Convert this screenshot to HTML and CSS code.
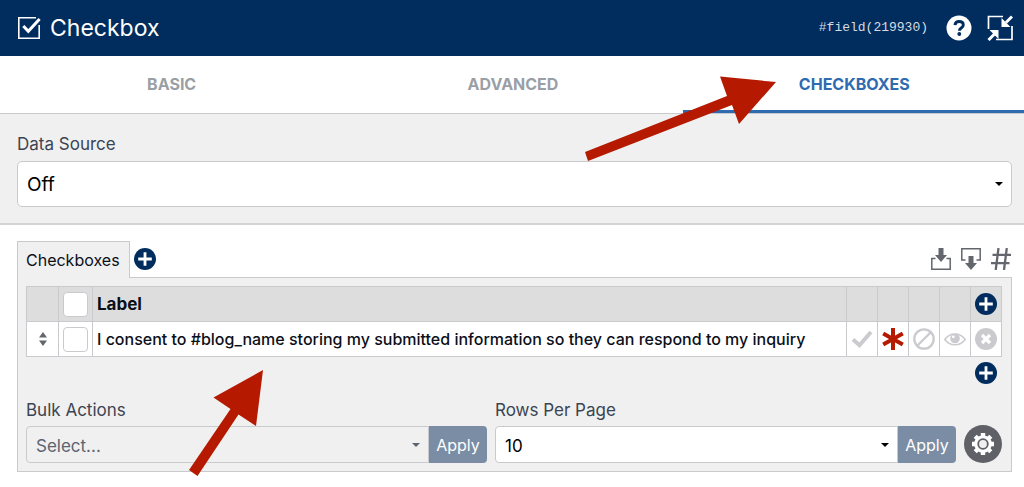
FILE: index.html
```html
<!DOCTYPE html>
<html lang="en">
<head>
<meta charset="utf-8">
<meta name="viewport" content="width=device-width, initial-scale=1">
<title>Checkbox</title>
<link rel="stylesheet" href="styles.css">
</head>
<body>
<svg class="sprite" aria-hidden="true">
  <symbol id="plus" viewBox="0 0 22 22"><circle cx="11" cy="11" r="11" fill="#002d5d"/><path d="M11 4.2v13.6M4.2 11h13.6" stroke="#fff" stroke-width="2.8"/></symbol>
</svg>
<header class="topbar">
  <svg class="icon-title" viewBox="0 0 24 24" fill="none" stroke="#fff" aria-hidden="true"><path d="M19 1.8H1.8v20.4h20.4V9" stroke-width="1.6"/><path d="M6.3 10l5 5.300L22.600 3" stroke-width="3"/></svg>
  <h1 class="title">Checkbox</h1>
  <code class="merge-tag">#field(219930)</code>
  <button class="icon-button help" aria-label="Help">
    <svg viewBox="0 0 26 26"><circle cx="13" cy="13" r="12.500" fill="#fff"/><path d="M9 10.200C9.200 7.600 10.800 6.500 13.100 6.500c2.400 0 4.200 1.300 4.200 3.500 0 3-3.900 3-3.900 5.700" fill="none" stroke="#002d5d" stroke-width="2.900"/><circle cx="13.300" cy="19" r="1.900" fill="#002d5d"/></svg>
  </button>
  <button class="icon-button" aria-label="Minimize">
    <svg viewBox="0 0 26 26"><path d="M1.500 14V1.500H16M25 11v13.500H9" fill="none" stroke="#fff" stroke-width="1.700"/><path d="M25 1.500l-6 6M1.500 25l6-6" stroke="#fff" stroke-width="3"/><path d="M14.500 3v9h9zM2.500 15h9v9z" fill="#fff"/></svg>
  </button>
</header>
<nav class="tabs">
  <a class="tab" href="#basic">BASIC</a>
  <a class="tab" href="#advanced">ADVANCED</a>
  <a class="tab active" href="#checkboxes" aria-current="page">CHECKBOXES</a>
</nav>
<main>
  <section class="source">
    <label class="label" for="source">Data Source</label>
    <div class="select-wrap"><select class="select large" id="source"><option>Off</option></select></div>
  </section>
  <section class="options">
    <div class="options-head">
      <button class="subtab">Checkboxes</button>
      <button class="icon-button small" aria-label="Add table"><svg><use href="#plus"/></svg></button>
      <div class="tools">
        <button class="icon-button small" aria-label="Import"><svg viewBox="0 0 22 22"><path d="M5.500 10.500H1.800v10.700h18.400V10.500h-3.700" fill="none" stroke="#63666c" stroke-width="1.500"/><path d="M8.500 0h5v7H17l-6 7-6-7h3.500z" fill="#63666c"/></svg></button>
        <button class="icon-button small" aria-label="Export"><svg viewBox="0 0 22 22"><path d="M5.500 12H1.800V.8h18.400V12h-3.700" fill="none" stroke="#63666c" stroke-width="1.500"/><path d="M8.500 8h5v7H17l-6 7-6-7h3.500z" fill="#63666c"/></svg></button>
        <button class="icon-button small" aria-label="Show IDs"><svg viewBox="0 0 22 22"><path d="M8.500 0L5.700 22M16.800 0L14 22M2.500 6.800H21M1 15.200h18.500" fill="none" stroke="#63666c" stroke-width="2.300"/></svg></button>
      </div>
    </div>
    <div class="panel">
      <table class="grid">
        <thead>
          <tr>
            <th class="col-handle"></th>
            <th class="col-check"><input class="check" type="checkbox" aria-label="Select all rows"></th>
            <th class="col-label">Label</th>
            <th class="col-icon"></th><th class="col-icon"></th><th class="col-icon"></th><th class="col-icon"></th>
            <th class="col-icon"><button class="icon-button small" aria-label="Add row"><svg><use href="#plus"/></svg></button></th>
          </tr>
        </thead>
        <tbody>
          <tr>
            <td><button class="icon-button handle" aria-label="Move row"><svg viewBox="0 0 8 14"><path d="M4 0l4 5.500H0zM4 14l4-5.500H0z" fill="#63666c"/></svg></button></td>
            <td><input class="check" type="checkbox" aria-label="Select row"></td>
            <td class="col-label">I consent to #blog_name storing my submitted information so they can respond to my inquiry</td>
            <td><button class="icon-button small" aria-label="Default"><svg viewBox="0 0 22 22"><path d="M2 11.500l6.500 5.700L20 4" fill="none" stroke="#cbcbcf" stroke-width="4"/></svg></button></td>
            <td><button class="icon-button small" aria-label="Required"><svg viewBox="0 0 22 22"><path d="M11 0v22M1.200 5.500l19.600 11M1.200 16.500l19.600-11" stroke="#b51a00" stroke-width="4"/></svg></button></td>
            <td><button class="icon-button small" aria-label="Disabled"><svg viewBox="0 0 22 22"><circle cx="11" cy="11" r="9.700" fill="none" stroke="#cbcbcf" stroke-width="2.300"/><path d="M4.500 17.500l13-13" stroke="#cbcbcf" stroke-width="2.300"/></svg></button></td>
            <td><button class="icon-button small" aria-label="Visibility"><svg viewBox="0 0 22 22"><path d="M.8 11.500C6 4 16 4 21.200 11.500 16 18.500 6 18.500.8 11.500z" fill="none" stroke="#cbcbcf" stroke-width="1.500"/><circle cx="11" cy="10.500" r="4.800" fill="#cbcbcf"/><circle cx="9.300" cy="8.800" r="1.400" fill="#fff"/></svg></button></td>
            <td><button class="icon-button small" aria-label="Delete row"><svg viewBox="0 0 22 22"><circle cx="11" cy="11" r="11" fill="#cbcbcf"/><path d="M7 7l8 8M15 7l-8 8" stroke="#fff" stroke-width="3.200"/></svg></button></td>
          </tr>
        </tbody>
      </table>
      <div class="add-row"><button class="icon-button small" aria-label="Add row at end"><svg><use href="#plus"/></svg></button></div>
      <div class="actions">
        <div class="field">
          <label class="label" for="bulk">Bulk Actions</label>
          <div class="combo">
            <div class="select-wrap muted"><select class="select" id="bulk"><option>Select...</option></select></div>
            <button class="apply">Apply</button>
          </div>
        </div>
        <div class="field">
          <label class="label" for="rows">Rows Per Page</label>
          <div class="combo">
            <div class="select-wrap"><select class="select" id="rows"><option>10</option></select></div>
            <button class="apply">Apply</button>
          </div>
        </div>
        <button class="icon-button gear" aria-label="Settings"><svg viewBox="0 0 38 38"><circle cx="19" cy="19" r="19" fill="#606167"/><circle cx="19" cy="19" r="8.800" fill="#fff"/><path d="M19 8v22M8 19h22M11.200 11.200l15.600 15.600M26.800 11.200L11.200 26.800" stroke="#fff" stroke-width="4.400"/><circle cx="19" cy="19" r="4.800" fill="#f0f0f0" stroke="#606167" stroke-width="1.800"/></svg></button>
      </div>
    </div>
  </section>
</main>
<svg class="arrows" width="1024" height="487" fill="#b51a00" aria-hidden="true">
  <path d="M585 152L727 96 720 76.500 776 82 739 124 732 105 588 161z"/>
  <path d="M189 470L230.500 409 213.500 397.500 263 370 256 426 238.500 414.500 197.500 476z"/>
</svg>
</body>
</html>
```
FILE: styles.css
```css
* { box-sizing: border-box; }

body {
  margin: 0;
  position: relative;
  overflow-x: hidden;
  background: #fff;
  color: #0b0f19;
  font: 17px/24px Inter, "Liberation Sans", sans-serif;
}

button, select, input { font: inherit; margin: 0; }

.sprite { position: absolute; width: 0; height: 0; }

.arrows {
  position: absolute;
  top: 0;
  left: 0;
  pointer-events: none;
}

.icon-button {
  display: block;
  flex: none;
  width: 26px;
  height: 26px;
  padding: 0;
  border: 0;
  background: none;
}

.icon-button svg { display: block; width: 100%; height: 100%; }
.small { width: 22px; height: 22px; }

.topbar {
  display: flex;
  align-items: center;
  height: 56px;
  padding: 0 11px 0 17px;
  background: #002d5d;
  color: #fff;
}

.icon-title { width: 24px; height: 24px; margin-right: 9px; }

.title {
  margin: 0;
  font-size: 23px;
  font-weight: 400;
  line-height: 32px;
}

.merge-tag {
  margin-left: auto;
  color: #d5dbe3;
  font: 13px/16px "Liberation Mono", monospace;
}

.help { margin: 0 15px 0 18px; }

.tabs {
  display: grid;
  grid-template-columns: repeat(3, 1fr);
  height: 58px;
  border-bottom: 1px solid #c9cace;
}

.tab {
  display: flex;
  align-items: center;
  justify-content: center;
  padding: 2px 0 0 2px;
  border-bottom: 3px solid transparent;
  color: #9a9fa6;
  font-size: 16px;
  font-weight: 700;
  text-decoration: none;
}

.tab.active { border-color: #2e6bb0; color: #2e6bb0; }

.source {
  padding: 18px 12px 16px 17px;
  border-bottom: 2px solid #d3d3d3;
  background: #f0f0f0;
}

.label { display: block; color: #3b4452; }
.source .label { margin-bottom: 5px; }

.select-wrap { position: relative; flex: 1; }

.select-wrap::after {
  content: "";
  position: absolute;
  top: 50%;
  right: 9px;
  margin-top: -2px;
  border: 4px solid transparent;
  border-top-color: #000;
  border-bottom: 0;
  pointer-events: none;
}

.select {
  display: block;
  width: 100%;
  height: 37px;
  padding: 3px 24px 0 9px;
  border: 1px solid #c9cace;
  border-radius: 4px 0 0 4px;
  appearance: none;
  background: #fff;
  color: #000;
}

.select.large {
  height: 46px;
  padding-top: 1px;
  border-radius: 5px;
  font-size: 19px;
}

.muted .select { background: #f0f0f0; color: #5b6471; }
.muted::after { border-top-color: #5b6471; }

.options { padding: 16px 12px 15px 17px; }
.options-head { display: flex; align-items: center; gap: 4px; }

.subtab {
  position: relative;
  height: 37px;
  margin-bottom: -1px;
  padding: 0 9px 0 8px;
  border: 1px solid #c9cace;
  border-bottom: 0;
  background: #f0f0f0;
  color: #0b0f19;
  font-size: 16px;
}

.tools { display: flex; gap: 8px; margin-left: auto; }

.panel {
  padding: 8px 9px 8px 8px;
  border: 1px solid #c9cace;
  background: #f0f0f0;
}

.grid {
  width: 100%;
  border-collapse: collapse;
  table-layout: fixed;
}

.grid th, .grid td {
  height: 35px;
  padding: 0;
  border: 1px solid #c9cace;
  background: #fff;
}

.grid th { background: #ddd; }
.grid td { font-size: 16px; font-weight: 500; }
.grid .col-label { padding-left: 4px; text-align: left; }
.grid .col-handle { width: 32px; }
.grid .col-check { width: 34px; }
.grid .col-icon { width: 31px; }
.grid .icon-button { margin: 0 auto; }
.grid .handle { width: 8px; height: 14px; }

.check {
  display: block;
  width: 25px;
  height: 25px;
  margin: 0 auto;
  border: 1px solid #c9cace;
  border-radius: 4px;
  appearance: none;
  background: #fff;
}

.add-row { display: flex; justify-content: flex-end; padding: 5px 5px 0; }

.actions { display: flex; align-items: flex-end; gap: 8px; margin-top: 14px; }
.field { flex: 1; }
.field .label { margin-bottom: 4px; }
.combo { display: flex; }

.apply {
  width: 58px;
  height: 37px;
  padding: 0;
  border: 0;
  border-radius: 0 4px 4px 0;
  background: #7a8da4;
  color: #fff;
  font-size: 16px;
}

.gear { width: 38px; height: 38px; }
```
